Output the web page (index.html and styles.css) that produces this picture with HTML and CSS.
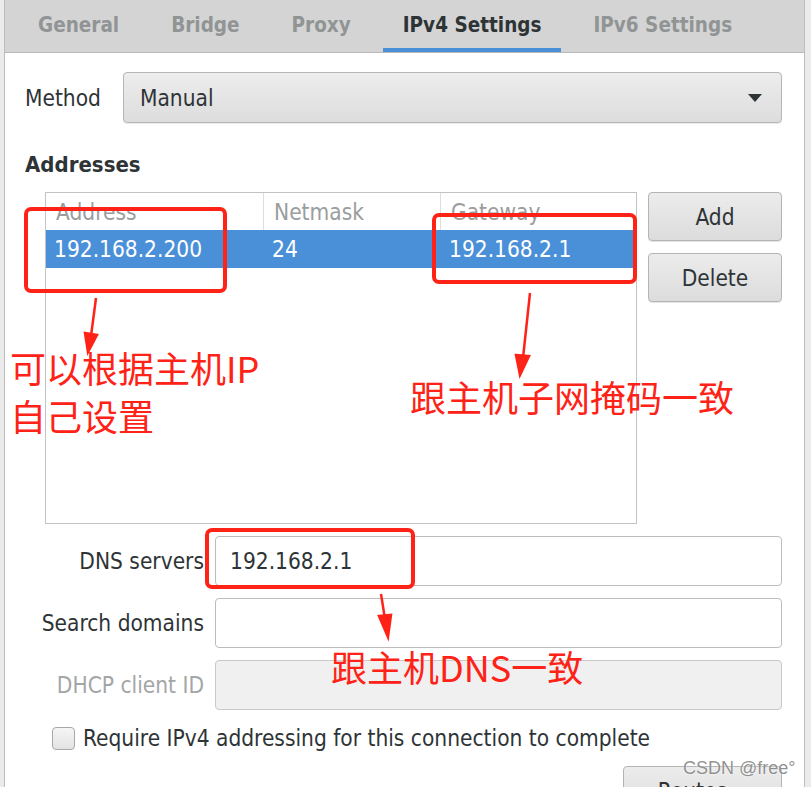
FILE: index.html
```html
<!DOCTYPE html>
<html lang="zh-CN">
<head>
    <meta charset="UTF-8">
    <title>IPv4 Settings</title>
    <link rel="stylesheet" href="styles.css">
</head>
<body>
    <div class="window">
        <div class="tabs">
            <div class="tab">General</div>
            <div class="tab">Bridge</div>
            <div class="tab">Proxy</div>
            <div class="tab active">IPv4 Settings</div>
            <div class="tab">IPv6 Settings</div>
        </div>

        <div class="content">
            <div class="method-row">
                <span class="method-label">Method</span>
                <div class="combo">
                    <span>Manual</span>
                    <span class="combo-arrow"></span>
                </div>
            </div>

            <h3 class="section">Addresses</h3>

            <div class="addr-area">
                <div class="addr-table">
                    <div class="row head">
                        <div class="cell">Address</div>
                        <div class="cell">Netmask</div>
                        <div class="cell">Gateway</div>
                    </div>
                    <div class="row selected">
                        <div class="cell">192.168.2.200</div>
                        <div class="cell">24</div>
                        <div class="cell">192.168.2.1</div>
                    </div>
                </div>
                <div class="addr-buttons">
                    <button class="btn">Add</button>
                    <button class="btn">Delete</button>
                </div>
            </div>

            <div class="form">
                <label class="form-label">DNS servers</label>
                <div class="entry">192.168.2.1</div>
                <label class="form-label">Search domains</label>
                <div class="entry"></div>
                <label class="form-label disabled">DHCP client ID</label>
                <div class="entry disabled"></div>
            </div>

            <div class="check-row">
                <span class="checkbox"></span>
                <span>Require IPv4 addressing for this connection to complete</span>
            </div>

            <div class="routes-row">
                <button class="btn routes">Routes…</button>
            </div>
        </div>
    </div>

    <!-- 标注层 -->
    <div class="overlay">
        <svg class="marks" viewBox="0 0 811 787" xmlns="http://www.w3.org/2000/svg">
            <g fill="none" stroke="#fe2217" stroke-width="4">
                <rect x="26" y="209" width="199" height="82" rx="5"/>
                <rect x="434" y="215" width="201" height="67" rx="5"/>
                <rect x="207" y="530" width="206" height="57" rx="5"/>
            </g>
            <g stroke="#fe2217" stroke-width="2.5" fill="#fe2217">
                <line x1="96" y1="298" x2="91" y2="336"/>
                <polygon points="85,333 97,335 88,352"/>
                <line x1="530" y1="293" x2="523" y2="358"/>
                <polygon points="516,355 529,356 520,375"/>
                <line x1="381" y1="594" x2="385" y2="619"/>
                <polygon points="379,616 391,615 388,637"/>
            </g>
        </svg>
        <div class="note note-ip">可以根据主机IP</div>
        <div class="note note-self">自己设置</div>
        <div class="note note-mask">跟主机子网掩码一致</div>
        <div class="note note-dns">跟主机DNS一致</div>
        <div class="watermark">CSDN @free°</div>
    </div>
</body>
</html>
```

FILE: styles.css
```css
* {
    box-sizing: border-box;
}

body {
    position: relative;
    margin: 0;
    width: 811px;
    height: 787px;
    overflow: hidden;
    background: #ebebeb;
    font-family: "DejaVu Sans Condensed", "DejaVu Sans", sans-serif;
    font-size: 22.5px;
    color: #2e3436;
}

.window {
    margin-left: 4px;
    width: 801px;
    height: 787px;
    background: #fff;
    border-left: 1px solid #bdbdbd;
    border-right: 1px solid #bdbdbd;
}

/* barra de abas */
.tabs {
    display: flex;
    height: 53px;
    padding-left: 13px;
    background: #d4d4d4;
    border-bottom: 1px solid #bababa;
}

.tab {
    display: flex;
    align-items: center;
    padding: 1px 20px 0;
    margin-right: 12px;
    font-size: 20.5px;
    font-weight: bold;
    color: #919494;
    border-bottom: 4px solid transparent;
}

.tab.active {
    color: #2e3436;
    border-bottom-color: #4a90d9;
}

.content {
    padding: 19px 22px 0 20px;
}

.method-row {
    display: flex;
    align-items: center;
    gap: 22px;
}

.combo {
    flex: 1;
    height: 51px;
    display: flex;
    align-items: center;
    justify-content: space-between;
    padding: 0 19px 0 16px;
    background: linear-gradient(#ededed, #dddddd);
    border: 1px solid #b6b6b6;
    border-radius: 4px;
    box-shadow: 0 1px 0 rgba(0, 0, 0, 0.08);
}

.combo-arrow {
    width: 0;
    height: 0;
    border-left: 7px solid transparent;
    border-right: 7px solid transparent;
    border-top: 8px solid #2e3436;
}

.section {
    margin: 29px 0 0;
    font-size: 22px;
    line-height: 26px;
    font-weight: bold;
}

.addr-area {
    display: flex;
    gap: 11px;
    margin: 14px 0 0 20px;
}

.addr-table {
    width: 592px;
    height: 332px;
    border: 1px solid #c3c3c3;
}

.row {
    display: grid;
    grid-template-columns: 218px 177px 1fr;
    height: 38px;
}

.row.head {
    height: 37px;
    color: #9a9d9d;
}

.cell {
    display: flex;
    align-items: center;
    padding-left: 8px;
}

.head .cell {
    padding-left: 10px;
    border-right: 1px solid #dedede;
}

.head .cell:last-child {
    border-right: none;
}

.row.selected {
    background: #4a90d9;
    color: #fff;
}

.addr-buttons {
    display: flex;
    flex-direction: column;
    gap: 12px;
    width: 134px;
}

.btn {
    height: 49px;
    font-family: inherit;
    font-size: 22.5px;
    color: #2e3436;
    background: linear-gradient(#ececec, #dcdcdc);
    border: 1px solid #b4b4b4;
    border-radius: 4px;
    box-shadow: 0 1px 0 rgba(0, 0, 0, 0.1);
}

.form {
    display: grid;
    grid-template-columns: 164px 1fr;
    column-gap: 11px;
    row-gap: 12px;
    margin: 12px 0 0 15px;
}

.form-label {
    align-self: center;
    text-align: right;
    white-space: nowrap;
}

.form-label.disabled {
    color: #a3a6a6;
}

.entry {
    height: 50px;
    display: flex;
    align-items: center;
    padding-left: 14px;
    background: #fff;
    border: 1px solid #bcbcbc;
    border-radius: 4px;
}

.entry.disabled {
    background: #f0f0f0;
    border-color: #c9c9c9;
}

.check-row {
    display: flex;
    align-items: center;
    gap: 8px;
    margin: 15px 0 0 27px;
}

.checkbox {
    width: 23px;
    height: 23px;
    background: linear-gradient(#f5f5f5, #e3e3e3);
    border: 1px solid #a8a8a8;
    border-radius: 4px;
}

.routes-row {
    display: flex;
    justify-content: flex-end;
    margin-top: 15px;
}

.btn.routes {
    width: 159px;
}

/* camada de anotações */
.overlay {
    position: absolute;
    left: 0;
    top: 0;
    width: 811px;
    height: 787px;
    pointer-events: none;
}

.marks {
    position: absolute;
    left: 0;
    top: 0;
    width: 811px;
    height: 787px;
}

.note {
    position: absolute;
    font-family: "Noto Sans CJK SC", "Noto Sans", sans-serif;
    font-size: 36px;
    line-height: 44px;
    color: #fe2217;
    white-space: nowrap;
}

.note-ip {
    left: 10px;
    top: 345px;
}

.note-self {
    left: 10px;
    top: 393px;
}

.note-mask {
    left: 410px;
    top: 374px;
}

.note-dns {
    left: 331px;
    top: 644px;
}

.watermark {
    position: absolute;
    left: 683px;
    top: 758px;
    font-family: "Liberation Sans", sans-serif;
    font-size: 18px;
    color: rgba(110, 110, 110, 0.75);
    text-shadow: 0 0 2px #fff;
}
```
